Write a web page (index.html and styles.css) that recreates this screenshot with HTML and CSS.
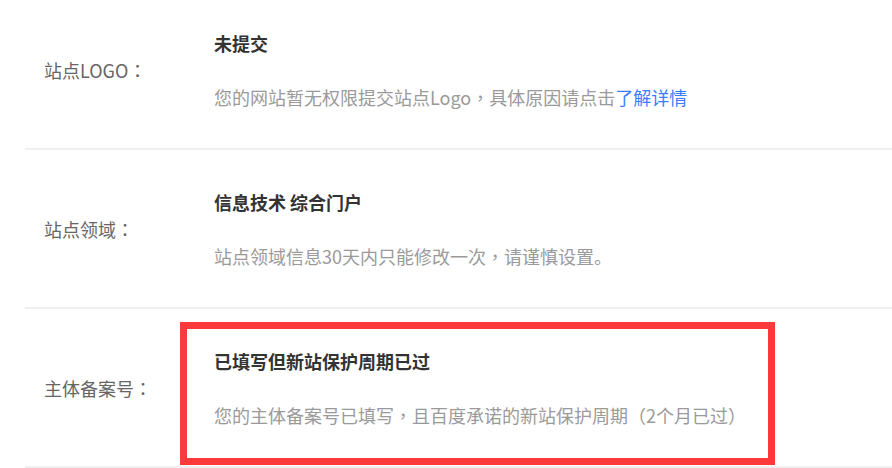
FILE: index.html
```html
<!DOCTYPE html>
<html lang="zh-CN">
<head>
<meta charset="utf-8">
<title>站点信息</title>
<link rel="stylesheet" href="styles.css">
</head>
<body>
<div class="list">
  <div class="row">
    <div class="label">站点LOGO<span class="p" lang="zh-TW">：</span></div>
    <div class="value">
      <div class="title">未提交</div>
      <div class="desc">您的网站暂无权限提交站点Logo<span class="p" lang="zh-TW">，</span>具体原因请点击<a class="link" href="#">了解详情</a></div>
    </div>
  </div>
  <div class="row">
    <div class="label">站点领域<span class="p" lang="zh-TW">：</span></div>
    <div class="value">
      <div class="title">信息技术 综合门户</div>
      <div class="desc">站点领域信息30天内只能修改一次<span class="p" lang="zh-TW">，</span>请谨慎设置。</div>
    </div>
  </div>
  <div class="row">
    <div class="label">主体备案号<span class="p" lang="zh-TW">：</span></div>
    <div class="value">
      <div class="title">已填写但新站保护周期已过</div>
      <div class="desc">您的主体备案号已填写<span class="p" lang="zh-TW">，</span>且百度承诺的新站保护周期（2个月已过）</div>
    </div>
    <div class="highlight"></div>
  </div>
</div>
</body>
</html>
```
FILE: styles.css
```css
html, body {
  margin: 0;
  padding: 0;
  background: #ffffff;
}
body {
  font-family: "Noto Sans CJK SC", "Microsoft YaHei", sans-serif;
  font-size: 18px;
  overflow: hidden;
}
.list {
  margin-top: -9px;
  padding-left: 25px;
}
.row {
  position: relative;
  display: flex;
  align-items: center;
  height: 157px;
  border-bottom: 2px solid #f0f0f0;
}
.label {
  width: 170px;
  padding-left: 19px;
  flex-shrink: 0;
  color: #666666;
  line-height: 24px;
}
.value {
  display: flex;
  flex-direction: column;
  gap: 30px;
}
.title {
  color: #333333;
  font-weight: 700;
  line-height: 24px;
}
.desc {
  color: #9a9a9a;
  line-height: 24px;
}
.p {
  font-family: "Noto Sans CJK TC", "Noto Sans CJK SC", sans-serif;
}
.link {
  color: #3b7cff;
  text-decoration: none;
}
.highlight {
  position: absolute;
  left: 155px;
  top: 13px;
  width: 595px;
  height: 143px;
  box-sizing: border-box;
  border: 7px solid #fd3939;
}
```
